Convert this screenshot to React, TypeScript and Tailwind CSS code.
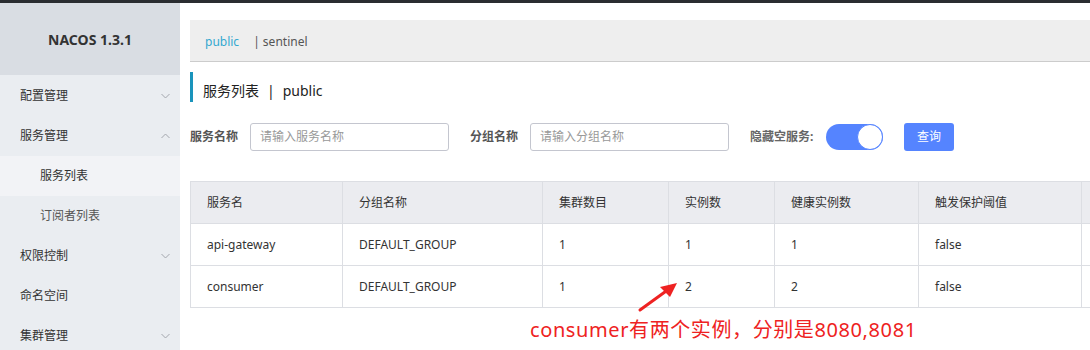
import React from "react";

const font = { fontFamily: '"Noto Sans", "Noto Sans CJK SC", sans-serif' };

function Chevron({ up }: { up?: boolean }) {
  return (
    <svg width="9" height="6" viewBox="0 0 9 6" className="text-[#a3a6ad]">
      <path d={up ? "M0.5 5L4.5 1L8.5 5" : "M0.5 1L4.5 5L8.5 1"} fill="none" stroke="currentColor" strokeWidth="1" />
    </svg>
  );
}

const menu: { label: string; chevron?: "up" | "down"; sub?: boolean; active?: boolean }[] = [
  { label: "配置管理", chevron: "down" },
  { label: "服务管理", chevron: "up" },
  { label: "服务列表", sub: true, active: true },
  { label: "订阅者列表", sub: true },
  { label: "权限控制", chevron: "down" },
  { label: "命名空间" },
  { label: "集群管理", chevron: "down" },
];

const cols = [
  { title: "服务名", w: 152 },
  { title: "分组名称", w: 200 },
  { title: "集群数目", w: 126 },
  { title: "实例数", w: 106 },
  { title: "健康实例数", w: 144 },
  { title: "触发保护阈值", w: 163 },
  { title: "", w: 60 },
];

const rows = [
  ["api-gateway", "DEFAULT_GROUP", "1", "1", "1", "false", ""],
  ["consumer", "DEFAULT_GROUP", "1", "2", "2", "false", ""],
];

export default function App() {
  return (
    <div className="w-[1090px] h-[350px] overflow-hidden bg-white relative" style={font}>
      <div className="h-[3px] bg-[#2a2d31]" />
      <div className="flex h-[347px]">
        <div className="w-[180px] shrink-0 bg-[#eaedf1] flex flex-col overflow-hidden">
          <div className="h-[72px] shrink-0 bg-[#d9dde3] flex items-center justify-center text-[14px] font-bold text-[#333]">
            NACOS 1.3.1
          </div>
          <div className="h-[1px] shrink-0" />
          {menu.map((m) => (
            <div
              key={m.label}
              className={`h-[40px] shrink-0 flex items-center justify-between pr-[10px] text-[12px] text-[#333] ${m.sub ? "pl-[40px]" : "pl-[20px]"} ${m.active ? "bg-[#f2f3f6]" : ""} ${m.sub && !m.active ? "text-[#555]" : ""}`}
            >
              <span>{m.label}</span>
              {m.chevron && <Chevron up={m.chevron === "up"} />}
            </div>
          ))}
        </div>
        <div className="flex-1 pl-[10px] pt-[17px] min-w-0">
          <div className="h-[42px] bg-[#eeeeee] border-b border-[#cccccc] flex items-center pl-[15px] pt-[3px] text-[12px]">
            <span className="text-[#33a8d0]">public</span>
            <span className="ml-[14px] text-[#555]">| sentinel</span>
          </div>
          <div className="mt-[10px] h-[30px] border-l-[3px] border-[#1a94bc] flex items-center pl-[10px] pt-[6px] text-[14px] text-[#222]">
            服务列表<span className="mx-[8px]">|</span>public
          </div>
          <div className="mt-[21px] flex items-center h-[28px] text-[12px]">
            <span className="font-bold text-[#555] w-[60px]">服务名称</span>
            <div className="w-[199px] h-[28px] border border-[#c4c6cf] rounded-[3px] flex items-center pl-[9px] text-[#999]">
              请输入服务名称
            </div>
            <span className="font-bold text-[#555] ml-[21px] w-[60px]">分组名称</span>
            <div className="w-[199px] h-[28px] border border-[#c4c6cf] rounded-[3px] flex items-center pl-[9px] text-[#999]">
              请输入分组名称
            </div>
            <span className="font-bold text-[#666] ml-[21px] w-[76px]">隐藏空服务:</span>
            <div className="w-[57px] h-[26px] rounded-full bg-[#5584ff] relative">
              <div className="absolute right-0 top-0 w-[26px] h-[26px] rounded-full bg-white border border-[#5584ff]" />
            </div>
            <div className="ml-[21px] w-[50px] h-[28px] rounded-[3px] bg-[#5584ff] text-white flex items-center justify-center">
              查询
            </div>
          </div>
          <div className="mt-[30px] border-l border-t border-[#dcdee3] w-[960px]">
            <div className="flex h-[42px] bg-[#ebecf0] border-b border-[#dcdee3]">
              {cols.map((c, i) => (
                <div
                  key={i}
                  className="shrink-0 border-r border-[#dcdee3] flex items-center pl-[16px] text-[12px] text-[#333]"
                  style={{ width: c.w }}
                >
                  {c.title}
                </div>
              ))}
            </div>
            {rows.map((r, ri) => (
              <div key={ri} className="flex h-[42px] border-b border-[#dcdee3]">
                {r.map((cell, i) => (
                  <div
                    key={i}
                    className="shrink-0 border-r border-[#dcdee3] flex items-center pl-[16px] text-[12px] text-[#333]"
                    style={{ width: cols[i].w }}
                  >
                    {cell}
                  </div>
                ))}
              </div>
            ))}
          </div>
        </div>
      </div>
      <svg className="absolute left-[636px] top-[280px]" width="46" height="34" viewBox="0 0 46 34">
        <path d="M4 30L33 9" stroke="#ee2222" strokeWidth="3" strokeLinecap="round" />
        <path d="M41 3L24 7L34 17Z" fill="#ee2222" />
      </svg>
      <div className="absolute left-[530px] top-[316px] text-[20px] tracking-[0.6px] text-[#ee2222] leading-[28px]">
        consumer有两个实例，分别是8080,8081
      </div>
    </div>
  );
}
